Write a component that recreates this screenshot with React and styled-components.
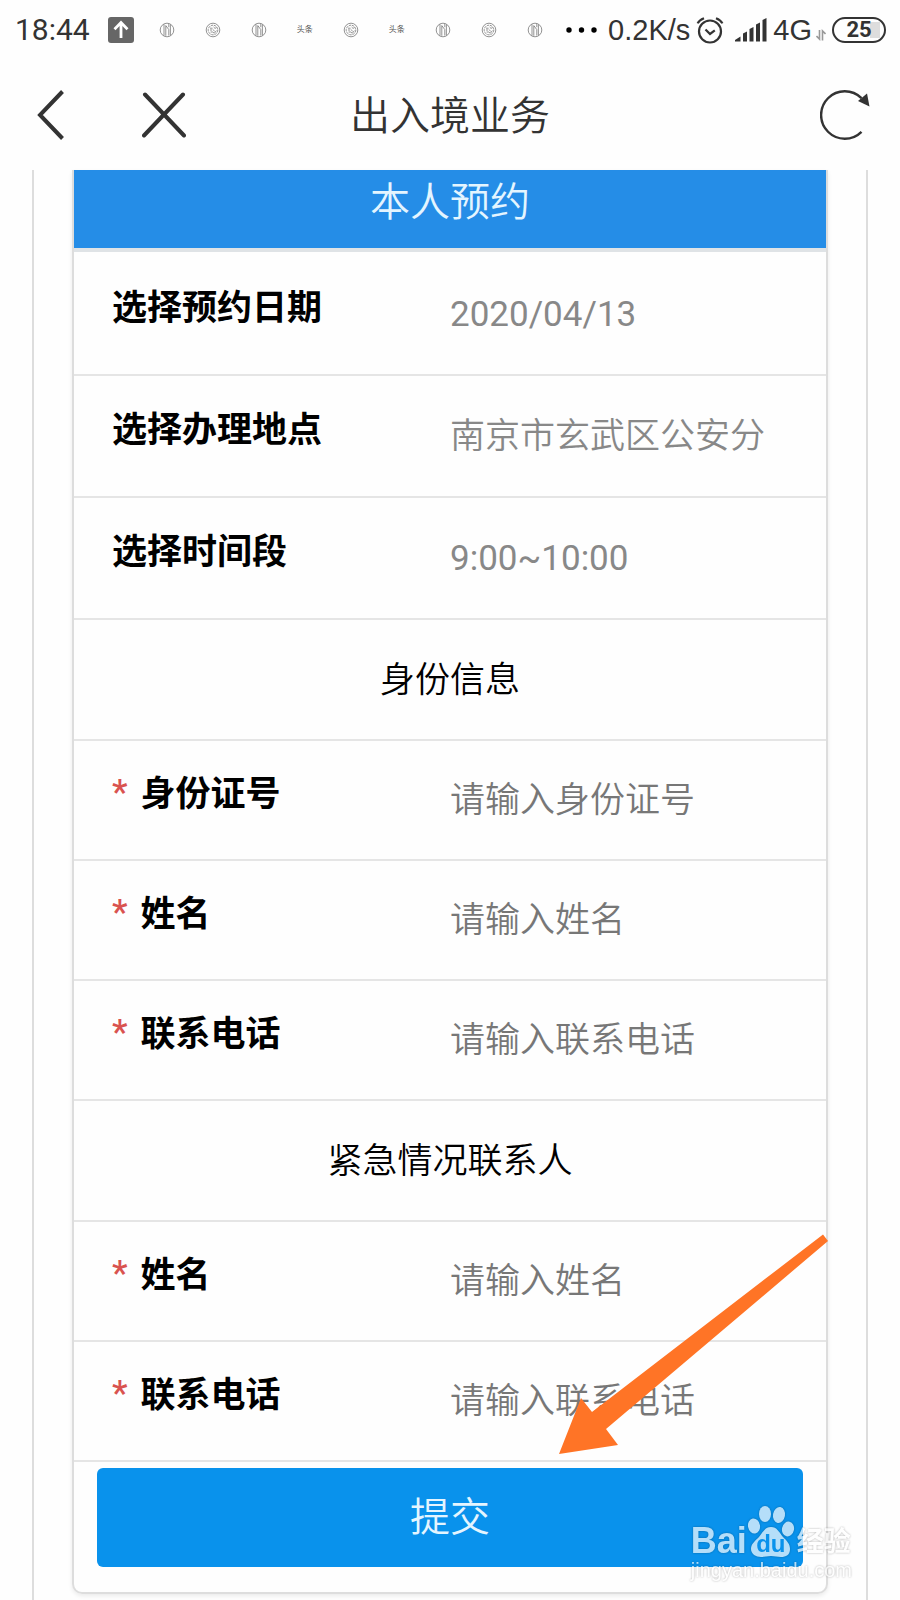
import React, { useState } from 'react';
import styled, { createGlobalStyle } from 'styled-components';

const notifications = ['news', 'coin', 'news', 'toutiao', 'coin', 'toutiao', 'news', 'coin', 'news'];

const identityFields = [
    { id: 'idNumber', label: '身份证号', placeholder: '请输入身份证号' },
    { id: 'name', label: '姓名', placeholder: '请输入姓名' },
    { id: 'phone', label: '联系电话', placeholder: '请输入联系电话' },
];

const emergencyFields = [
    { id: 'emergencyName', label: '姓名', placeholder: '请输入姓名' },
    { id: 'emergencyPhone', label: '联系电话', placeholder: '请输入联系电话' },
];

const NotificationIcon = ({ type }) => {
    if (type === 'toutiao') {
        return <Toutiao>头条</Toutiao>;
    }
    return (
        <svg width="16" height="16" viewBox="0 0 16 16" fill="none" stroke="#666" strokeWidth="0.7">
            <circle cx="8" cy="8" r="6.8" />
            {type === 'news' ? (
                <path d="M5 2.2v11.6M6.8 13.8V3.6l3 4v6M9.8 1.8v3.4M11.4 2.6v10.8" />
            ) : (
                <>
                    <circle cx="8" cy="8" r="4.8" strokeDasharray="2.5 0.8" />
                    <path d="M5 6.2h2.6M5 8h2M5.6 10h2l1.8 1.2 2-2.6M8.6 5l1.4 1.4 1.6-.8M8 7.4l1.6 2" />
                </>
            )}
        </svg>
    );
};

const StatusBar = () => (
    <Status>
        <Clock>18:44</Clock>
        <svg width="26" height="26" viewBox="0 0 26 26">
            <rect width="26" height="26" rx="3" fill="#666" />
            <path d="M13 21V6M6.5 12.2L13 5.6l6.5 6.6" fill="none" stroke="#fff" strokeWidth="2.8" />
        </svg>
        <Notifications>
            {notifications.map((type, i) => (
                <Slot key={i}>
                    <NotificationIcon type={type} />
                </Slot>
            ))}
        </Notifications>
        <svg width="32" height="6" viewBox="0 0 32 6">
            <circle cx="3" cy="3" r="2.7" />
            <circle cx="15.5" cy="3" r="2.7" />
            <circle cx="28" cy="3" r="2.7" />
        </svg>
        <Indicators>
            <StatusText>0.2K/s</StatusText>
            <svg width="28" height="28" viewBox="0 0 28 28" fill="none" stroke="#333" strokeWidth="2.2">
                <circle cx="14" cy="15.5" r="11" />
                <path d="M9.5 13.5l4.5 4.5 4.8-3.6M1.6 7.4Q3.2 4 8 2.2M26.4 7.4Q24.8 4 20 2.2" />
            </svg>
            <Signal width="32" height="24" viewBox="0 0 32 24" fill="#333">
                <path d="M0 23.5v-1.5l5.5-3.5v5zM8 15.5l4-2v10H8zM14.5 11l4-2v14.5h-4zM21 6.5l4-2v19h-4zM27.5 2l4-2v23.5h-4z" />
            </Signal>
            <StatusText>4G</StatusText>
            <Traffic width="10" height="12" viewBox="0 0 10 12" fill="none" stroke="#999" strokeWidth="1.6">
                <path d="M3.5 1v9L.5 7M6.5 11.5V2l3 3" />
            </Traffic>
            <Battery>25</Battery>
        </Indicators>
    </Status>
);

const Field = ({ id, label, placeholder }) => (
    <Row $height={120}>
        <Label htmlFor={id}>
            <Star>*</Star>
            {label}
        </Label>
        <Input id={id} type="text" placeholder={placeholder} />
    </Row>
);

const Watermark = () => (
    <Mark>
        <MarkLogo>
            <MarkBai>Bai</MarkBai>
            <Paw>
                <svg width="48" height="52" viewBox="0 0 48 52" fill="#fff">
                    <ellipse cx="7" cy="20" rx="6" ry="7.5" transform="rotate(-10 7 20)" />
                    <ellipse cx="18" cy="8" rx="6" ry="8" />
                    <ellipse cx="32" cy="9" rx="6" ry="8" transform="rotate(10 32 9)" />
                    <ellipse cx="41" cy="23" rx="6" ry="7.5" transform="rotate(12 41 23)" />
                    <path d="M24 21c6 0 8 5 12 10 4 4 7 7 7 12 0 6-4 8-9 8-4 0-6-1-10-1s-6 1-10 1c-5 0-10-3-10-8s4-8 8-12c4-5 6-10 12-10z" />
                </svg>
                <MarkDu>du</MarkDu>
            </Paw>
            <MarkName>经验</MarkName>
        </MarkLogo>
        <MarkUrl>jingyan.baidu.com</MarkUrl>
    </Mark>
);

const App = () => {
    const [date, setDate] = useState('2020/04/13');

    return (
        <Page>
            <GlobalStyle />
            <StatusBar />
            <Navbar>
                <NavActions>
                    <IconButton type="button" aria-label="返回">
                        <svg width="36" height="50" viewBox="-7 0 36 50" fill="none" stroke="#333" strokeWidth="4">
                            <path d="M25.5 1.5L3 25l22.5 23.5" />
                        </svg>
                    </IconButton>
                    <IconButton type="button" aria-label="关闭">
                        <svg width="44" height="46" viewBox="0 0 44 46" fill="none" stroke="#333" strokeWidth="4" strokeLinecap="round">
                            <path d="M3 2.5L42 43.5M41 2.5L2 43.5" />
                        </svg>
                    </IconButton>
                </NavActions>
                <Title>出入境业务</Title>
                <NavActions $end>
                    <IconButton type="button" aria-label="刷新">
                        <svg width="50" height="50" viewBox="0 0 50 50">
                            <path d="M41.5 41.8A23.7 23.7 0 1 1 41.5 8.2" fill="none" stroke="#333" strokeWidth="2.4" />
                            <path d="M47 3.5L49.5 16.5 38 11z" fill="#333" />
                        </svg>
                    </IconButton>
                </NavActions>
            </Navbar>
            <Panel>
                <Card>
                    <CardHeader>本人预约</CardHeader>
                    <Row $height={122}>
                        <Label htmlFor="date">选择预约日期</Label>
                        <Input id="date" type="text" value={date} onChange={(e) => setDate(e.target.value)} />
                    </Row>
                    <Row $height={122}>
                        <Label htmlFor="place">选择办理地点</Label>
                        <Select id="place" $light>
                            <option>南京市玄武区公安分</option>
                        </Select>
                    </Row>
                    <Row $height={122}>
                        <Label htmlFor="time">选择时间段</Label>
                        <Select id="time">
                            <option>9:00~10:00</option>
                        </Select>
                    </Row>
                    <SectionTitle>身份信息</SectionTitle>
                    {identityFields.map((field) => (
                        <Field key={field.id} {...field} />
                    ))}
                    <SectionTitle>紧急情况联系人</SectionTitle>
                    {emergencyFields.map((field) => (
                        <Field key={field.id} {...field} />
                    ))}
                    <Submit type="button">提交</Submit>
                    <Arrow width="270" height="220" viewBox="0 0 270 220">
                        <path d="M265 .5l5 6.5L48 195l12 16L1 220l22-56 11 14z" fill="#ff7426" />
                    </Arrow>
                    <Watermark />
                </Card>
            </Panel>
        </Page>
    );
};

const GlobalStyle = createGlobalStyle`
    * {
        box-sizing: border-box;
    }

    body {
        margin: 0;
        background-color: #fefefe;
        font-family: Roboto, 'Noto Sans CJK SC', sans-serif;
    }

    button, input, select {
        font-family: inherit;
    }
`;

const Page = styled.div`
    display: flex;
    flex-direction: column;
    min-height: 100vh;
`;

const Status = styled.div`
    display: flex;
    align-items: center;
    height: 60px;
    padding: 0 14px 0 15px;
    color: #333;
`;

const Clock = styled.span`
    margin-right: 18px;
    font-size: 30px;
    line-height: 36px;
`;

const Notifications = styled.div`
    display: flex;
    margin: 0 8px 0 10px;
`;

const Slot = styled.span`
    display: flex;
    align-items: center;
    justify-content: center;
    width: 46px;
`;

const Toutiao = styled.span`
    color: #555;
    font-size: 8px;
    line-height: 12px;
`;

const Indicators = styled.div`
    display: flex;
    align-items: center;
    gap: 6px;
    margin-left: auto;
`;

const StatusText = styled.span`
    font-family: 'Liberation Sans', sans-serif;
    font-size: 29px;
    line-height: 36px;
`;

const Signal = styled.svg`
    margin-left: 5px;
`;

const Traffic = styled.svg`
    margin: 10px 0 0 -2px;
`;

const Battery = styled.span`
    width: 54px;
    height: 26px;
    border: 2px solid #333;
    border-radius: 13px;
    background: linear-gradient(#ddd, #ddd) 36px 3px / 10px 16px no-repeat;
    font-size: 22px;
    font-weight: 700;
    line-height: 22px;
    text-align: center;
`;

const Navbar = styled.nav`
    display: grid;
    grid-template-columns: 1fr auto 1fr;
    align-items: center;
    height: 110px;
    padding: 0 30px;
`;

const NavActions = styled.div`
    display: flex;
    align-items: center;
    justify-content: ${({ $end }) => ($end ? 'flex-end' : 'flex-start')};
    gap: 76px;
`;

const IconButton = styled.button`
    display: flex;
    padding: 0;
    border: none;
    background: none;
    cursor: pointer;
`;

const Title = styled.h1`
    margin: 0;
    padding-top: 4px;
    color: #333;
    font-size: 40px;
    font-weight: 350;
    line-height: 50px;
`;

const Panel = styled.main`
    flex: 1;
    margin: 0 32px;
    padding: 0 38px 6px;
    border: solid #ddd;
    border-width: 0 2px;
`;

const Card = styled.form`
    position: relative;
    padding-bottom: 25px;
    border: 2px solid #ddd;
    border-top: none;
    border-radius: 0 0 10px 10px;
    box-shadow: 0 2px 4px rgba(0, 0, 0, 0.08);
`;

const CardHeader = styled.h2`
    height: 82px;
    margin: 0 0 2px;
    padding-top: 8px;
    border-bottom: 4px solid #dfe3e6;
    background-color: #258de7;
    background-clip: padding-box;
    color: #e4f5ff;
    font-size: 40px;
    font-weight: 350;
    line-height: 50px;
    text-align: center;
`;

const Row = styled.div`
    display: grid;
    grid-template-columns: 1fr 1fr;
    align-items: center;
    height: ${({ $height }) => $height}px;
    border-bottom: 2px solid #e5e5e5;
`;

const Label = styled.label`
    padding: 0 0 11px 38px;
    color: #000;
    font-size: 35px;
    font-weight: 700;
    line-height: 40px;
`;

const Star = styled.span`
    margin-right: 13px;
    color: #d9534f;
    font-weight: 500;
    line-height: 30px;
    vertical-align: 2px;
`;

const Input = styled.input`
    width: 100%;
    height: 50px;
    padding: 0;
    border: none;
    outline: none;
    background: none;
    color: #888;
    font-size: 35px;
    font-weight: 400;

    &::placeholder {
        color: #777;
        font-weight: 350;
    }
`;

const Select = styled.select`
    width: 100%;
    height: 50px;
    padding: 0;
    border: none;
    outline: none;
    background: none;
    color: #888;
    font-size: 35px;
    font-weight: ${({ $light }) => ($light ? 350 : 400)};
    appearance: none;
`;

const SectionTitle = styled.h3`
    display: flex;
    align-items: center;
    justify-content: center;
    height: 121px;
    margin: 0;
    padding-bottom: 6px;
    border-bottom: 2px solid #e5e5e5;
    color: #000;
    font-size: 35px;
    font-weight: 350;
`;

const Submit = styled.button`
    display: block;
    width: calc(100% - 46px);
    height: 99px;
    margin: 6px 23px 0;
    padding: 0 0 8px;
    border: none;
    border-radius: 6px;
    background-color: #0992ec;
    color: #e4f5ff;
    font-size: 40px;
    font-weight: 350;
    cursor: pointer;
`;

/* pointer lying over the last rows */
const Arrow = styled.svg`
    position: absolute;
    right: -2px;
    bottom: 138px;
    pointer-events: none;
`;

const Mark = styled.div`
    position: absolute;
    right: -26px;
    bottom: 10px;
    color: #fff;
    font-family: 'Liberation Sans', 'Noto Sans CJK SC', sans-serif;
    opacity: 0.7;
    filter: drop-shadow(0 0 1px rgba(0, 0, 0, 0.4));
    pointer-events: none;
`;

const MarkLogo = styled.div`
    display: flex;
    align-items: flex-end;
`;

const MarkBai = styled.span`
    font-size: 36px;
    font-weight: 700;
    line-height: 34px;
`;

const Paw = styled.span`
    position: relative;
    display: flex;
`;

const MarkDu = styled.span`
    position: absolute;
    left: 0;
    right: 0;
    bottom: 2px;
    color: #0992ec;
    font-size: 24px;
    font-weight: 700;
    line-height: 24px;
    text-align: center;
`;

const MarkName = styled.span`
    margin-left: 2px;
    font-size: 27px;
    font-weight: 700;
    line-height: 32px;
`;

const MarkUrl = styled.div`
    font-size: 20px;
    line-height: 24px;
`;

export default App;
